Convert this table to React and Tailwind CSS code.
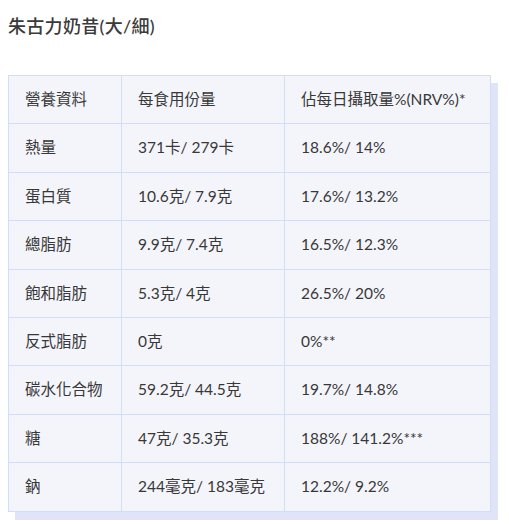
const rows = [
  ["熱量", "371卡/ 279卡", "18.6%/ 14%"],
  ["蛋白質", "10.6克/ 7.9克", "17.6%/ 13.2%"],
  ["總脂肪", "9.9克/ 7.4克", "16.5%/ 12.3%"],
  ["飽和脂肪", "5.3克/ 4克", "26.5%/ 20%"],
  ["反式脂肪", "0克", "0%**"],
  ["碳水化合物", "59.2克/ 44.5克", "19.7%/ 14.8%"],
  ["糖", "47克/ 35.3克", "188%/ 141.2%***"],
  ["鈉", "244毫克/ 183毫克", "12.2%/ 9.2%"],
];

const Cell = ({ children, className = "" }) => (
  <td className={`h-[48.4px] whitespace-nowrap border border-[#d3dcf8] px-4 align-middle ${className}`}>{children}</td>
);

export default function App() {
  return (
    <div className="min-h-[524px] bg-white px-2 pt-[13px] text-[#333] font-['Lato','Noto_Sans_CJK_TC',sans-serif]">
      <h2 className="text-[18px] font-medium leading-[26px] tracking-[0.3px] text-[#3a3a3a]">朱古力奶昔(大/細)</h2>
      <div className="mt-[36px] w-[483px] shadow-[7px_8px_0_0_#dfe4f8]">
        <table className="w-full table-fixed border-collapse bg-[#f4f5fb] text-[15.5px] text-[#383838]">
          <thead>
            <tr>
              <Cell className="w-[113px] font-normal">營養資料</Cell>
              <Cell className="w-[163px]">每食用份量</Cell>
              <Cell>佔每日攝取量%(NRV%)*</Cell>
            </tr>
          </thead>
          <tbody>
            {rows.map(r => (
              <tr key={r[0]}>
                <Cell>{r[0]}</Cell>
                <Cell>{r[1]}</Cell>
                <Cell>{r[2]}</Cell>
              </tr>
            ))}
          </tbody>
        </table>
      </div>
    </div>
  );
}
